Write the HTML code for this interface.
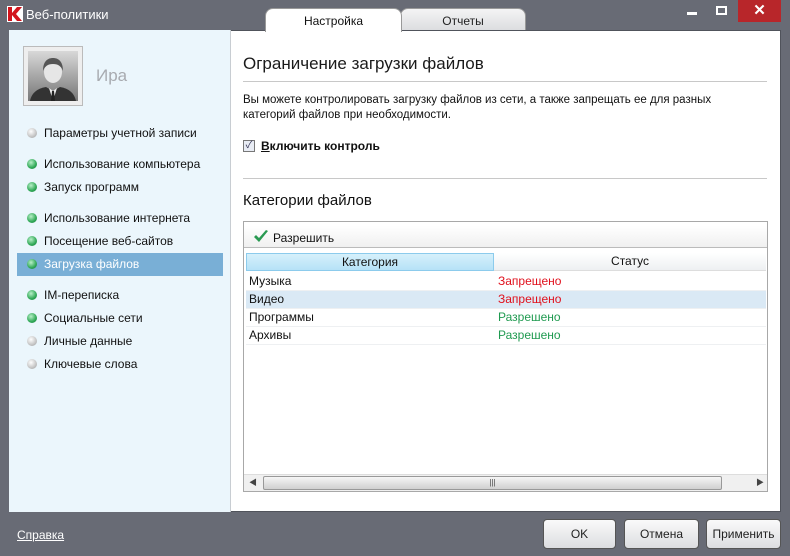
<!DOCTYPE html>
<html><head><meta charset="utf-8"><style>
*{margin:0;padding:0;box-sizing:border-box}
body{width:790px;height:556px;background:#686b75;font-family:"Liberation Sans","Noto Sans CJK SC",sans-serif;font-size:12px;color:#111;position:relative;overflow:hidden}
.a{position:absolute}
.title{left:26px;top:7px;color:#fff;font-size:13px}
.main{left:9px;top:30px;width:772px;height:482px;background:#fff;border:1px solid #50535b}
.left{left:9px;top:30px;width:222px;height:482px;background:#ebf6fc;border-right:1px solid #c8cdd2}
.item{position:absolute;left:44px;font-size:12px;color:#111}
.dot{position:absolute;left:27px;width:10px;height:10px;border-radius:50%}
.g{background:radial-gradient(circle at 40% 35%,#b8f0c8,#2fa856 60%,#1e7a3c)}
.s{background:radial-gradient(circle at 40% 35%,#fff,#c4c4c4 60%,#999)}
.tab{top:8px;height:23px;text-align:center;font-size:12px;padding-top:5px;border-radius:8px 8px 0 0}
.btn{top:519px;height:30px;border:1px solid #555;border-radius:4px;background:linear-gradient(#fafafa,#dcdde0);text-align:center;line-height:28px;font-size:12px;color:#222}
.row{position:absolute;left:246px;width:520px;height:18px;border-bottom:1px solid #eef0f2;line-height:17px}
.row span{position:absolute;left:3px}
.row b{position:absolute;left:252px;font-weight:normal}
.r{color:#e0101c}.gr{color:#1f9a50}
</style></head><body>
<svg class="a" style="left:7px;top:6px" width="16" height="16"><rect width="16" height="16" fill="#fff"/><path d="M1 1h4v6l5-6h5l-6 7 6 7h-5l-5-6v6H1z" fill="#d2141c"/></svg>
<div class="a title">Веб-политики</div>
<div class="a" style="left:687px;top:12px;width:10px;height:3px;background:#fff"></div>
<div class="a" style="left:716px;top:6px;width:11px;height:9px;border:2px solid #fff"></div>
<div class="a" style="left:738px;top:0;width:43px;height:22px;background:#b8262a;color:#fff;text-align:center;font-size:15px;font-weight:bold;line-height:22px">✕</div>
<div class="a tab" style="left:400px;width:126px;background:linear-gradient(#f4f4f5,#dcdde0);border:1px solid #999;color:#222">Отчеты</div>
<div class="a tab" style="left:265px;width:137px;background:#fff;border:1px solid #999;border-bottom:none;z-index:2;height:24px">Настройка</div>
<div class="a main"></div>
<div class="a left"></div>
<div class="a" style="left:23px;top:46px;width:60px;height:60px;border:1px solid #bbb;background:#eee;padding:4px">
<svg width="50" height="50"><defs><linearGradient id="bg" x1="0" y1="0" x2="0" y2="1"><stop offset="0" stop-color="#d8d8d8"/><stop offset="1" stop-color="#777"/></linearGradient></defs><rect width="50" height="50" fill="url(#bg)"/><path d="M2 50c2-10 10-13 16-14l7 4 7-4c6 1 14 4 16 14z" fill="#333"/><path d="M21 37l4 13 4-13-4 3z" fill="#eee"/><path d="M24 40h2l1 10h-4z" fill="#222"/><ellipse cx="25" cy="21" rx="9" ry="11" fill="#e6e6e6"/><path d="M15 20c0-9 4-13 10-13s10 4 10 13c-2-5-5-7-10-7s-8 2-10 7z" fill="#555"/></svg></div>
<div class="a" style="left:96px;top:66px;font-size:17px;color:#a8abb0">Ира</div>
<div class="dot s" style="top:128px"></div><div class="item" style="top:126px">Параметры учетной записи</div>
<div class="dot g" style="top:159px"></div><div class="item" style="top:157px">Использование компьютера</div>
<div class="dot g" style="top:182px"></div><div class="item" style="top:180px">Запуск программ</div>
<div class="dot g" style="top:213px"></div><div class="item" style="top:211px">Использование интернета</div>
<div class="dot g" style="top:236px"></div><div class="item" style="top:234px">Посещение веб-сайтов</div>
<div class="a" style="left:17px;top:253px;width:206px;height:23px;background:#79afd6"></div>
<div class="dot g" style="top:259px"></div><div class="item" style="top:257px;color:#fff">Загрузка файлов</div>
<div class="dot g" style="top:290px"></div><div class="item" style="top:288px">IM-переписка</div>
<div class="dot g" style="top:313px"></div><div class="item" style="top:311px">Социальные сети</div>
<div class="dot s" style="top:336px"></div><div class="item" style="top:334px">Личные данные</div>
<div class="dot s" style="top:359px"></div><div class="item" style="top:357px">Ключевые слова</div>
<div class="a" style="left:243px;top:54px;font-size:17px;color:#1a1a1a">Ограничение загрузки файлов</div>
<div class="a" style="left:243px;top:81px;width:524px;height:1px;background:#c8c8c8"></div>
<div class="a" style="left:243px;top:93px;line-height:15px;font-size:11.5px">Вы можете контролировать загрузку файлов из сети, а также запрещать ее для разных<br>категорий файлов при необходимости.</div>
<div class="a" style="left:243px;top:140px;width:12px;height:12px;border:1px solid #777;background:#e8ecf4;color:#335;font-size:10px;line-height:10px;text-align:center">✓</div>
<div class="a" style="left:261px;top:139px;font-weight:bold;font-size:12px"><u>В</u>ключить контроль</div>
<div class="a" style="left:243px;top:178px;width:524px;height:1px;background:#c8c8c8"></div>
<div class="a" style="left:243px;top:192px;font-size:15px">Категории файлов</div>
<div class="a" style="left:243px;top:221px;width:525px;height:271px;border:1px solid #a8a8a8"></div>
<div class="a" style="left:244px;top:226px;width:523px;height:22px;background:linear-gradient(#fff,#f0f0f0);border-bottom:1px solid #bbb"></div>
<svg class="a" style="left:253px;top:230px" width="16" height="14"><path d="M1 7l5 5 9-11-2-1-7 8-3-3z" fill="#2a9a52"/></svg>
<div class="a" style="left:273px;top:231px;font-size:12px">Разрешить</div>
<div class="a" style="left:246px;top:253px;width:248px;height:18px;background:linear-gradient(#d6f0fb,#b6e2f7);border:1px solid #8ccbec;text-align:center;line-height:16px">Категория</div>
<div class="a" style="left:494px;top:253px;width:272px;height:18px;background:linear-gradient(#fff,#eef0f2);border-bottom:1px solid #ddd;text-align:center;line-height:17px">Статус</div>
<div class="row" style="top:273px"><span>Музыка</span><b class="r">Запрещено</b></div>
<div class="row" style="top:291px;background:#dae9f5"><span>Видео</span><b class="r">Запрещено</b></div>
<div class="row" style="top:309px"><span>Программы</span><b class="gr">Разрешено</b></div>
<div class="row" style="top:327px"><span>Архивы</span><b class="gr">Разрешено</b></div>
<div class="a" style="left:244px;top:474px;width:523px;height:17px;background:#f0f0f0;border-top:1px solid #ddd"></div>
<div class="a" style="left:249px;top:477px;font-size:8px;color:#444">◀</div>
<div class="a" style="left:263px;top:476px;width:459px;height:14px;border:1px solid #999;border-radius:2px;background:linear-gradient(#f6f6f6,#d0d0d0);text-align:center;font-size:8px;line-height:12px;color:#444">|||</div>
<div class="a" style="left:756px;top:477px;font-size:8px;color:#444">▶</div>
<div class="a" style="left:17px;top:528px;color:#fff;text-decoration:underline;font-size:12px">Справка</div>
<div class="a btn" style="left:543px;width:73px">OK</div>
<div class="a btn" style="left:624px;width:75px">Отмена</div>
<div class="a btn" style="left:706px;width:75px">Применить</div>
</body></html>
